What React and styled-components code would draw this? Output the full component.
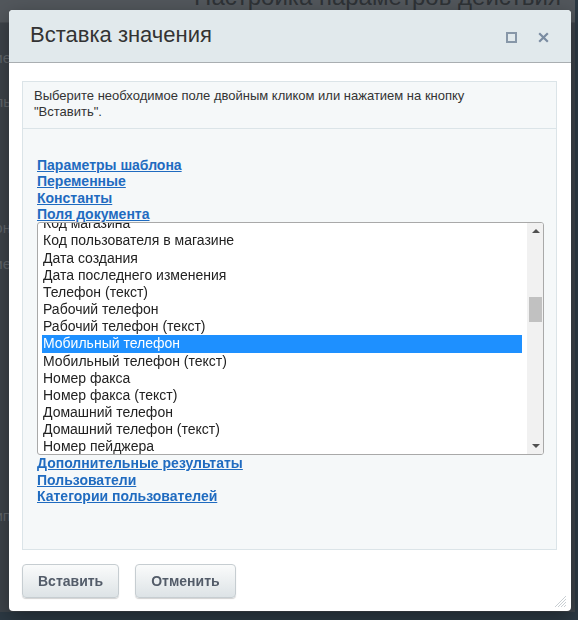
import React from 'react';
import styled, { createGlobalStyle } from 'styled-components';

const GlobalStyle = createGlobalStyle`
    html, body {
        margin: 0;
        padding: 0;
        height: 100%;
        overflow: hidden;
        background: #2c3943;
        font-family: "Liberation Sans", Arial, sans-serif;
    }
`;

// ---- the page that sits under the modal shade ----

const Page = styled.div`
    height: 620px;
    overflow: hidden;
`;

const ParentWindow = styled.div`
    width: 575px;
    height: 612px;
    background: #3d4349;
    display: flex;
    flex-direction: column;
`;

const ParentHeader = styled.div`
    height: 22px;
    background: #52575c;
    border-bottom: 1px solid #474c51;
    display: flex;
    align-items: flex-end;
    justify-content: flex-end;
    overflow: hidden;
    padding-right: 14px;
`;

const ParentTitle = styled.div`
    font-size: 24px;
    line-height: 24px;
    color: #2e3236;
    margin-bottom: 13px;
    white-space: nowrap;
`;

const ParentRows = styled.div`
    display: flex;
    flex-direction: column;
    padding-top: 26px;
`;

const ParentRow = styled.div`
    height: ${p => p.h}px;
    width: 11px;
    display: flex;
    justify-content: flex-end;
    overflow: hidden;
    font-size: 15px;
    color: #61666b;
    white-space: nowrap;
`;

// ---- modal ----

const Shade = styled.div`
    position: fixed;
    inset: 0;
`;

const Dialog = styled.div`
    position: absolute;
    top: 10px;
    left: 9px;
    width: 562px;
    height: 601px;
    background: #fff;
    border-radius: 4px;
    box-shadow: 0 6px 20px rgba(0, 0, 0, 0.35);
    display: flex;
    flex-direction: column;
    overflow: hidden;
`;

const Header = styled.div`
    height: 52px;
    flex: none;
    background: #e1e9ec;
    border-bottom: 1px solid #a9aeb1;
    display: flex;
    align-items: center;
    justify-content: space-between;
    padding: 0 22px 0 21px;
`;

const Title = styled.div`
    font-size: 22px;
    color: #333;
    padding-bottom: 2px;
`;

const HeaderTools = styled.div`
    display: flex;
    gap: 21px;
    padding-top: 3px;
`;

const ToolButton = styled.span`
    width: 11px;
    height: 11px;
    display: flex;
    color: ${p => p.color};
`;

const Body = styled.div`
    flex: 1;
    display: flex;
    padding: 18px 14px 0 13px;
    min-height: 0;
`;

const Panel = styled.div`
    flex: 1;
    background: #f5f8f9;
    border: 1px solid #dbe4e8;
    display: flex;
    flex-direction: column;
`;

const Hint = styled.div`
    font-size: 13px;
    line-height: 16px;
    color: #333;
    padding: 6px 12px 8px 11px;
    border-bottom: 1px solid #dbe4e8;
`;

const HintText = styled.div`
    max-width: 490px;
`;

const Tree = styled.div`
    padding: 28px 0 0 14px;
    display: flex;
    flex-direction: column;
    align-items: flex-start;
`;

const GroupLink = styled.a`
    font-size: 14px;
    line-height: 16.33px;
    font-weight: bold;
    color: #1f6bc0;
    text-decoration: underline;
    cursor: pointer;
`;

const ListBox = styled.div`
    width: 507px;
    height: 233px;
    box-sizing: border-box;
    border: 1px solid #a9a9a9;
    border-radius: 3px;
    background: #fff;
    display: flex;
    overflow: hidden;
`;

const Options = styled.div`
    flex: 1;
    overflow: hidden;
    padding: 0 5px 0 4px;
`;

const OptionStrip = styled.div`
    margin-top: ${p => p.offset}px;
`;

const Option = styled.div`
    height: 17.17px;
    line-height: 17.17px;
    font-size: 14px;
    padding-left: 1px;
    white-space: nowrap;
    color: ${p => (p.selected ? '#fff' : '#222')};
    background: ${p => (p.selected ? '#1e90ff' : 'transparent')};
`;

const ScrollTrack = styled.div`
    width: 16px;
    flex: none;
    background: #f1f1f1;
    display: flex;
    flex-direction: column;
`;

const ScrollArrow = styled.div`
    height: 16px;
    flex: none;
    display: flex;
    align-items: center;
    justify-content: center;
    padding-left: 1px;
`;

const ScrollRail = styled.div`
    flex: 1;
    padding: 0 1px 0 2px;
`;

const Thumb = styled.div`
    height: 25px;
    background: #c1c1c1;
`;

const Footer = styled.div`
    flex: none;
    display: flex;
    gap: 16px;
    padding: 14px 13px 13px;
`;

const Button = styled.button`
    height: 34px;
    padding: 0 ${p => p.pad}px;
    border: 1px solid #c6cdd1;
    border-radius: 4px;
    background: linear-gradient(to bottom, #fafbfb 0%, #dde3e6 100%);
    box-shadow: 0 1px 1px rgba(0, 0, 0, 0.18);
    font-family: "Liberation Sans", Arial, sans-serif;
    font-size: 14px;
    font-weight: bold;
    color: #535c69;
    cursor: pointer;
`;

const Grip = styled.svg`
    position: absolute;
    right: 4px;
    bottom: 3px;
`;

const fields = [
    'Код магазина',
    'Код пользователя в магазине',
    'Дата создания',
    'Дата последнего изменения',
    'Телефон (текст)',
    'Рабочий телефон',
    'Рабочий телефон (текст)',
    'Мобильный телефон',
    'Мобильный телефон (текст)',
    'Номер факса',
    'Номер факса (текст)',
    'Домашний телефон',
    'Домашний телефон (текст)',
    'Номер пейджера',
    'Номер пейджера (текст)',
    'Почтовый ящик',
];

const parentRows = [
    { h: 44, text: 'Название' },
    { h: 126, text: 'Исполнитель' },
    { h: 36, text: 'Шаблон' },
    { h: 252, text: 'Описание' },
    { h: 104, text: 'Тип' },
];

const App = () => {
    const selected = 'Мобильный телефон';

    return (
        <>
            <GlobalStyle />
            <Page>
                <ParentWindow>
                    <ParentHeader>
                        <ParentTitle>Настройка параметров действия</ParentTitle>
                    </ParentHeader>
                    <ParentRows>
                        {parentRows.map(r => (
                            <ParentRow key={r.text} h={r.h}>{r.text}</ParentRow>
                        ))}
                    </ParentRows>
                </ParentWindow>
            </Page>

            <Shade>
                <Dialog>
                    <Header>
                        <Title>Вставка значения</Title>
                        <HeaderTools>
                            <ToolButton color="#8797a8" title="Развернуть">
                                <svg width="11" height="11" viewBox="0 0 11 11">
                                    <rect x="1" y="1" width="9" height="9" fill="none" stroke="currentColor" strokeWidth="2" />
                                </svg>
                            </ToolButton>
                            <ToolButton color="#7a8ca1" title="Закрыть">
                                <svg width="11" height="11" viewBox="0 0 11 11">
                                    <path d="M1.2 1.2 L9.8 9.8 M9.8 1.2 L1.2 9.8" stroke="currentColor" strokeWidth="2.2" />
                                </svg>
                            </ToolButton>
                        </HeaderTools>
                    </Header>

                    <Body>
                        <Panel>
                            <Hint>
                                <HintText>
                                    Выберите необходимое поле двойным кликом или нажатием на кнопку "Вставить".
                                </HintText>
                            </Hint>
                            <Tree>
                                <GroupLink>Параметры шаблона</GroupLink>
                                <GroupLink>Переменные</GroupLink>
                                <GroupLink>Константы</GroupLink>
                                <GroupLink>Поля документа</GroupLink>
                                <ListBox>
                                    <Options>
                                        <OptionStrip offset={-8}>
                                            {fields.map(f => (
                                                <Option key={f} selected={f === selected}>{f}</Option>
                                            ))}
                                        </OptionStrip>
                                    </Options>
                                    <ScrollTrack>
                                        <ScrollArrow>
                                            <svg width="8" height="4" viewBox="0 0 8 4">
                                                <path d="M0 4 L4 0 L8 4 Z" fill="#505050" />
                                            </svg>
                                        </ScrollArrow>
                                        <ScrollRail>
                                            <Thumb style={{ marginTop: 58 }} />
                                        </ScrollRail>
                                        <ScrollArrow>
                                            <svg width="8" height="4" viewBox="0 0 8 4">
                                                <path d="M0 0 L8 0 L4 4 Z" fill="#505050" />
                                            </svg>
                                        </ScrollArrow>
                                    </ScrollTrack>
                                </ListBox>
                                <GroupLink>Дополнительные результаты</GroupLink>
                                <GroupLink>Пользователи</GroupLink>
                                <GroupLink>Категории пользователей</GroupLink>
                            </Tree>
                        </Panel>
                    </Body>

                    <Footer>
                        <Button pad={15}>Вставить</Button>
                        <Button pad={15}>Отменить</Button>
                    </Footer>

                    <Grip width="13" height="13" viewBox="0 0 13 13">
                        <path d="M12 1 L1 12 M12 4 L4 12 M12 7 L7 12 M12 10 L10 12" stroke="#c9cfd3" strokeWidth="1" />
                    </Grip>
                </Dialog>
            </Shade>
        </>
    );
};

export default App;
